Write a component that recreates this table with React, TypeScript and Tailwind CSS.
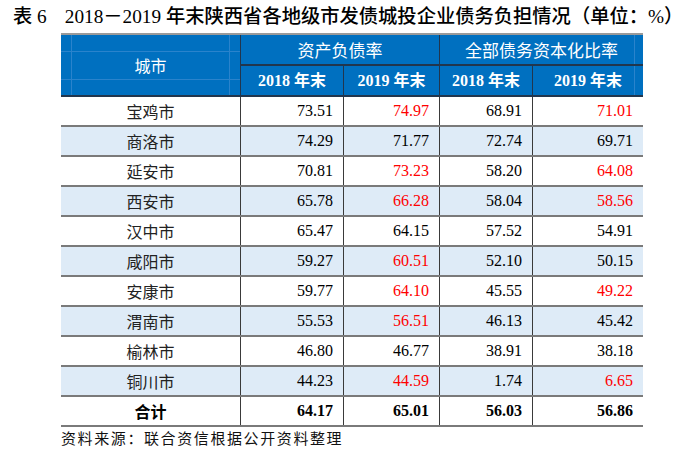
const rows: [string, string, boolean, string, boolean, string, boolean, string, boolean][] = [
  ["宝鸡市", "73.51", false, "74.97", true, "68.91", false, "71.01", true],
  ["商洛市", "74.29", false, "71.77", false, "72.74", false, "69.71", false],
  ["延安市", "70.81", false, "73.23", true, "58.20", false, "64.08", true],
  ["西安市", "65.78", false, "66.28", true, "58.04", false, "58.56", true],
  ["汉中市", "65.47", false, "64.15", false, "57.52", false, "54.91", false],
  ["咸阳市", "59.27", false, "60.51", true, "52.10", false, "50.15", false],
  ["安康市", "59.77", false, "64.10", true, "45.55", false, "49.22", true],
  ["渭南市", "55.53", false, "56.51", true, "46.13", false, "45.42", false],
  ["榆林市", "46.80", false, "46.77", false, "38.91", false, "38.18", false],
  ["铜川市", "44.23", false, "44.59", true, "1.74", false, "6.65", true],
];

const serif = "font-['Liberation_Serif','Noto_Sans_CJK_SC',serif]";
const cols = "grid grid-cols-[179px_103px_96px_93px_111px]";

function Num({ v, red, bold }: { v: string; red?: boolean; bold?: boolean }) {
  return (
    <div
      className={`flex items-center justify-end border-l border-[#3a3a3a] pr-[10px] text-[16px] ${
        red ? "text-[#ff0000]" : "text-black"
      } ${bold ? "font-bold" : ""}`}
    >
      {v}
    </div>
  );
}

export default function App() {
  return (
    <div className={`h-[450px] w-[700px] bg-white ${serif}`}>
      <div className="flex h-[33px] items-center pl-[13px] text-[19.3px] font-medium leading-none text-black">
        <span>表 6</span>
        <span className="ml-[18px]">2018－2019 年末陕西省各地级市发债城投企业债务负担情况（单位：%）</span>
      </div>

      <div className="ml-[61px] w-[582px] border-t-2 border-[#9a9a9a]">
        {/* header */}
        <div className={`${cols} grid-rows-[31px_29px] border-b-2 border-[#22364d] bg-[#0070c0] text-white`}>
          <div className="relative row-span-2 flex items-center justify-center text-[16px] font-['Noto_Sans_CJK_SC',sans-serif]">
            <span className="pointer-events-none absolute inset-x-0 top-[16px] h-px bg-[#2a83cc]" />
            <span className="pointer-events-none absolute inset-x-0 bottom-[15px] h-px bg-[#2a83cc]" />
            <span className="pointer-events-none absolute inset-y-0 left-[10px] w-px bg-[#2a83cc]" />
            <span className="pointer-events-none absolute inset-y-0 right-[10px] w-px bg-[#2a83cc]" />
            <span className="relative">城市</span>
          </div>
          <div className="col-span-2 flex items-center justify-center border-b-2 border-l border-[#22364d] text-[17px] font-['Noto_Sans_CJK_SC',sans-serif]">
            资产负债率
          </div>
          <div className="relative col-span-2 flex items-center justify-center border-b-2 border-l border-[#22364d] text-[17px] font-['Noto_Sans_CJK_SC',sans-serif]">
            <span className="pointer-events-none absolute inset-y-0 right-[8px] w-px bg-[#2a83cc]" />
            全部债务资本化比率
          </div>
          <div className="flex items-center justify-center border-l border-[#22364d] text-[16px] font-bold">2018 年末</div>
          <div className="flex items-center justify-center border-l border-[#22364d] text-[16px] font-bold">2019 年末</div>
          <div className="flex items-center justify-center border-l border-[#22364d] text-[16px] font-bold">2018 年末</div>
          <div className="relative flex items-center justify-center border-l border-[#22364d] text-[16px] font-bold">
            <span className="pointer-events-none absolute inset-y-0 right-[8px] w-px bg-[#2a83cc]" />
            <span className="relative">2019 年末</span>
          </div>
        </div>

        {/* body */}
        {rows.map((r, i) => (
          <div
            key={r[0]}
            className={`${cols} h-[30px] border-b-2 border-[#7a7a7a] ${i % 2 === 1 ? "bg-[#deebf7]" : "bg-white"}`}
          >
            <div className="flex items-center justify-center text-[16px] text-[#222] font-['Noto_Sans_CJK_SC',sans-serif]">
              {r[0]}
            </div>
            <Num v={r[1]} red={r[2]} />
            <Num v={r[3]} red={r[4]} />
            <Num v={r[5]} red={r[6]} />
            <Num v={r[7]} red={r[8]} />
          </div>
        ))}
        <div className={`${cols} h-[30px] border-b-2 border-[#7a7a7a] bg-white`}>
          <div className="flex items-center justify-center text-[16px] font-bold text-black font-['Noto_Sans_CJK_SC',sans-serif]">
            合计
          </div>
          <Num v="64.17" bold />
          <Num v="65.01" bold />
          <Num v="56.03" bold />
          <Num v="56.86" bold />
        </div>
      </div>

      <div className="ml-[61px] mt-[1px] text-[15px] leading-[20px] tracking-[1.6px] text-[#111] font-['Noto_Sans_CJK_SC',sans-serif]">
        资料来源：联合资信根据公开资料整理
      </div>
    </div>
  );
}
